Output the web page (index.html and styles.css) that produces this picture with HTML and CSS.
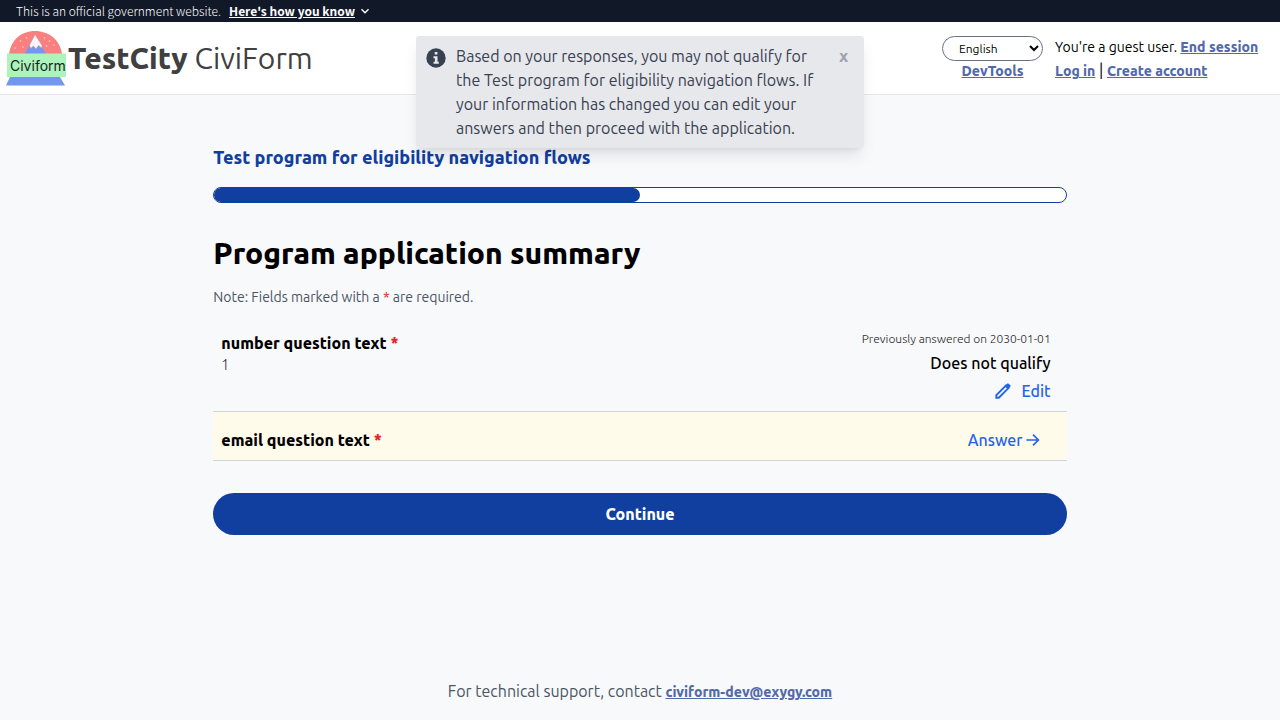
FILE: index.html
```html
<!DOCTYPE html>
<html lang="en">
<head>
<meta charset="utf-8">
<meta name="viewport" content="width=device-width, initial-scale=1">
<title>Program application summary</title>
<link rel="stylesheet" href="styles.css">
</head>
<body>
<div class="gov-banner">
  <span class="gov-text">This is an official government website.</span>
  <button class="gov-toggle" type="button"><span class="gov-toggle-text">Here's how you know</span>
    <svg class="chevron" viewBox="0 0 12 12" aria-hidden="true"><path d="M2.5 4.2 6 7.7l3.5-3.5" fill="none" stroke="currentColor" stroke-width="1.4"/></svg>
  </button>
</div>
<header class="site-header">
  <div class="brand">
    <svg class="logo" viewBox="0 0 62 57" role="img" aria-label="Civiform logo">
      <path d="M3 24C5 10 15 1 29 1s25 9 27 23z" fill="#fa8080"/>
      <path d="M18.500 24 29 5l11 19z" fill="#7397f0"/>
      <path d="M29 4.500 23.500 15l1 3.500 3-2.500 2.500 3 2.500-3.500 3 2.500.5-2.500z" fill="#f7f5f6" stroke="#c08d98" stroke-width=".5"/>
      <g fill="#fdd5d5"><circle cx="20.500" cy="8" r=".8"/><circle cx="14.500" cy="11" r=".8"/><circle cx="17" cy="17" r=".8"/><circle cx="9" cy="18" r=".8"/><circle cx="38.500" cy="8" r=".8"/><circle cx="43.500" cy="11" r=".8"/><circle cx="40.500" cy="16" r=".8"/><circle cx="48" cy="15" r=".8"/></g>
      <path d="M4 47h50l5 8.500H0z" fill="#7397f0"/>
      <path d="M1 23.500h59V47H1z" fill="#acf4bb"/>
      <text x="4" y="41" class="logo-text">Civiform</text>
    </svg>
    <div class="brand-name"><b>TestCity</b> CiviForm</div>
  </div>
  <nav class="account">
    <div class="account-tools">
      <select class="language" aria-label="Language"><option>English</option></select>
      <a class="link" href="#">DevTools</a>
    </div>
    <div class="account-session">
      <div>You're a guest user. <a class="link" href="#">End session</a></div>
      <div><a class="link" href="#">Log in</a><span class="divider"> | </span><a class="link" href="#">Create account</a></div>
    </div>
  </nav>
</header>
<div class="toast" role="alert">
  <svg class="toast-icon" viewBox="0 0 20 20" aria-hidden="true"><circle cx="10" cy="10" r="9.700" fill="#374151"/><path d="M8.700 4h2.700v2.500H8.700zM7.500 8.200h4v5.600h1.300v2H7.500v-2h1.400v-3.600H7.500z" fill="#e7e8eb"/></svg>
  <p class="toast-text">Based on your responses, you may not qualify for the Test program for eligibility navigation flows. If your information has changed you can edit your answers and then proceed with the application.</p>
  <button class="toast-close" type="button" aria-label="Dismiss">x</button>
</div>
<main class="content">
  <h2 class="program-title">Test program for eligibility navigation flows</h2>
  <div class="progress" role="progressbar" aria-label="Application progress" aria-valuenow="50"><div class="progress-fill" style="width:50%"></div></div>
  <h1 class="page-title">Program application summary</h1>
  <p class="note">Note: Fields marked with a <span class="required">*</span> are required.</p>
  <section class="row">
    <div class="row-main">
      <div class="question">number question text <span class="required">*</span></div>
      <div class="answer">1</div>
    </div>
    <div class="row-side">
      <div class="previous">Previously answered on 2030-01-01</div>
      <div class="status">Does not qualify</div>
      <a class="action edit" href="#"><svg class="action-icon" viewBox="0 0 24 24" aria-hidden="true"><path d="M4 17 15.500 5.500l3 3L7 20H4z" fill="none" stroke="currentColor" stroke-width="2.300"/><path d="m14 6 3-2.800a1.300 1.300 0 0 1 1.800 0l2 2a1.300 1.300 0 0 1 0 1.800L18 10z" fill="currentColor"/></svg>Edit</a>
    </div>
  </section>
  <section class="row row-unanswered">
    <div class="question">email question text <span class="required">*</span></div>
    <a class="action next" href="#">Answer<svg class="action-icon" viewBox="0 0 24 24" aria-hidden="true"><path d="M4 12h15M12 5.500l6.500 6.500-6.500 6.500" fill="none" stroke="currentColor" stroke-width="2"/></svg></a>
  </section>
  <button class="continue" type="button">Continue</button>
</main>
<footer class="footer">For technical support, contact <a class="link" href="#">civiform-dev@exygy.com</a></footer>
</body>
</html>
```
FILE: styles.css
```css
* { box-sizing: border-box; }
body {
  margin: 0;
  min-height: 100vh;
  display: flex;
  flex-direction: column;
  background: #f8f9fb;
  color: #000;
  font: 16px/24px Ubuntu, "Noto Sans", sans-serif;
}
h1, h2, p { margin: 0; }
b, h1 { font-weight: 800; }
button { border: 0; background: none; color: inherit; font: inherit; cursor: pointer; }
.gov-banner {
  display: flex;
  align-items: center;
  gap: 8px;
  height: 22px;
  padding: 0 16px;
  background: #111827;
  color: #fff;
  font: 12px/16px "Source Sans Pro", "Noto Sans CJK SC", sans-serif;
}
.gov-text { font-weight: 300; }
.gov-toggle { display: flex; align-items: center; gap: 4px; padding: 0; font-weight: 700; }
.gov-toggle-text { text-decoration: underline; }
.chevron { width: 12px; height: 12px; }
.site-header {
  display: flex;
  justify-content: space-between;
  align-items: center;
  height: 73px;
  padding: 0 20px 0 6px;
  background: #fff;
  border-bottom: 1px solid #e5e7eb;
}
.brand { display: flex; align-items: center; }
.logo { width: 62px; height: 57px; }
.logo-text { font: 14px Inter, sans-serif; fill: #17251b; }
.brand-name { color: #404040; font-size: 30px; line-height: 36px; }
.account { display: flex; gap: 12px; padding-top: 2px; font-size: 14px; }
.account-tools { display: flex; flex-direction: column; align-items: center; padding-top: 1px; }
.account-session { min-width: 205px; }
.language {
  width: 101px;
  height: 25px;
  padding: 0 0 0 12px;
  border: 1px solid #6b7280;
  border-radius: 13px;
  background: #fff;
  color: #000;
  font: 12px Ubuntu, "Noto Sans", sans-serif;
}
.account-tools .link { line-height: 20px; }
.link { color: #526aa9; font-size: 14px; font-weight: 800; text-decoration: underline; }
.divider { font-size: 16px; line-height: 16px; }
.toast {
  position: absolute;
  top: 36px;
  left: 50%;
  width: 448px;
  margin-left: -224px;
  display: flex;
  align-items: flex-start;
  padding: 8px 10px;
  border-radius: 3px;
  background: rgb(229 231 235 / 94%);
  color: #374151;
  box-shadow: 0 10px 15px -3px rgb(0 0 0 / 10%), 0 4px 6px -4px rgb(0 0 0 / 10%);
}
.toast-icon { flex: none; width: 20px; height: 20px; margin: 4px 10px 0 0; }
.toast-text { flex: 1; }
.toast-close { padding: 0 6px 0 16px; color: #9ca3af; font-weight: 800; }
.content { width: 66.667%; margin: 48px auto 0; flex: 1; }
.program-title { color: #113f9f; font-size: 18px; line-height: 28px; font-weight: 800; }
.progress {
  height: 16px;
  margin-top: 16px;
  border: 1px solid #113f9f;
  border-radius: 8px;
  background: #fff;
}
.progress-fill { height: 100%; border-radius: 8px; background: #113f9f; }
.page-title { margin-top: 32px; font-size: 30px; line-height: 36px; }
.note { margin-top: 16px; color: #4b5563; font-size: 14px; line-height: 20px; }
.required { color: #dc2626; }
.row { display: flex; justify-content: space-between; border-bottom: 1px solid #d1d5db; }
.row:first-of-type { margin-top: 20px; height: 85px; padding: 0 16px 0 8px; }
.row-main { padding-top: 4px; }
.question { font-weight: 800; }
.answer { color: #222; font-size: 14px; line-height: 20px; font-weight: 300; }
.row-side { display: flex; flex-direction: column; align-items: flex-end; }
.previous { color: #222; font-size: 12px; line-height: 24px; font-weight: 300; }
.status { font-weight: 500; }
.action { display: flex; align-items: center; color: #2563eb; font-weight: 500; text-decoration: none; }
.action-icon { width: 20px; height: 20px; }
.edit { gap: 8px; line-height: 32px; }
.row-unanswered { padding: 16px 24px 8px 8px; background: #fffbeb; }
.continue {
  display: block;
  width: 100%;
  margin-top: 32px;
  padding: 9px;
  border-radius: 21px;
  background: #113f9f;
  color: #fff;
  font-weight: 800;
}
.footer { padding: 0 16px 16px; color: #4b5563; text-align: center; }
```
